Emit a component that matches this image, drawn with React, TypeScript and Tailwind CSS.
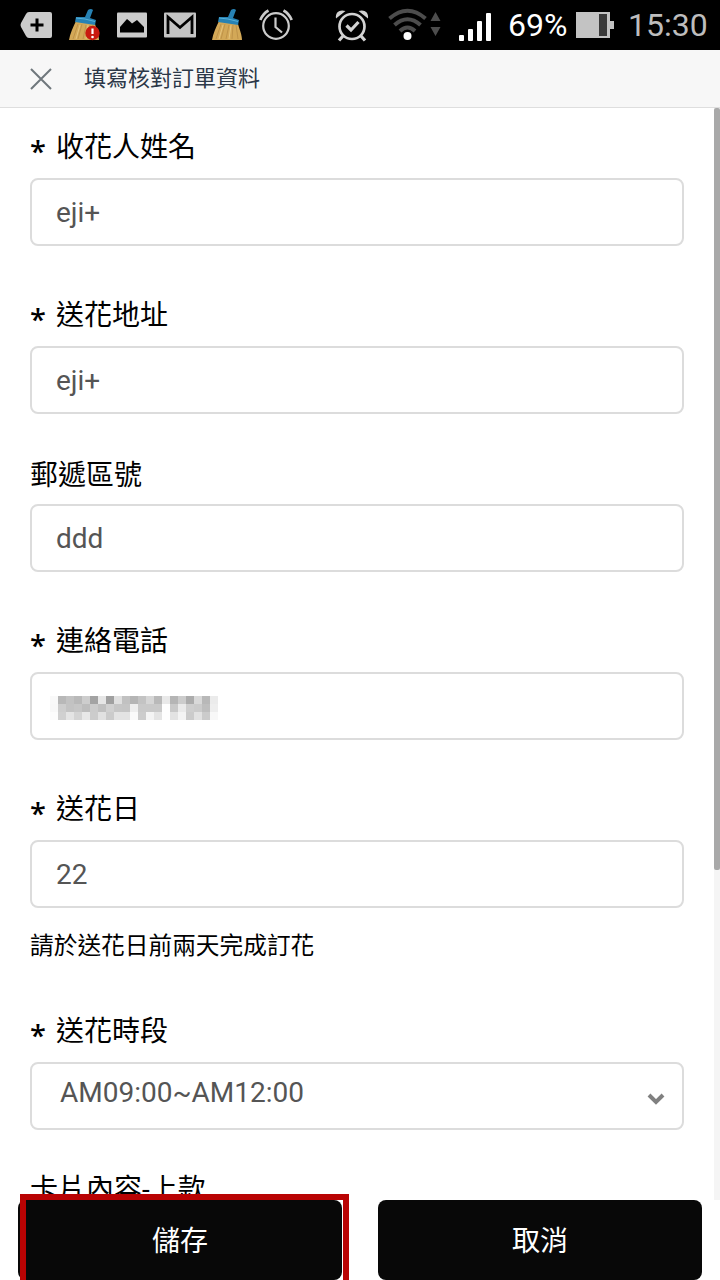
import React from "react";

interface FieldData {
  label: string;
  value?: string;
  required?: boolean;
  hint?: string;
  masked?: boolean;
  select?: boolean;
  className: string;
  labelClass: string;
}

const FIELDS: FieldData[] = [
  { label: "收花人姓名", value: "eji+", required: true, className: "pt-5", labelClass: "mb-[10px]" },
  { label: "送花地址", value: "eji+", required: true, className: "pt-[50px]", labelClass: "mb-[10px]" },
  { label: "郵遞區號", value: "ddd", className: "pt-[42px]", labelClass: "mb-2" },
  { label: "連絡電話", masked: true, required: true, className: "pt-[50px]", labelClass: "mb-[10px]" },
  { label: "送花日", value: "22", required: true, hint: "請於送花日前兩天完成訂花", className: "pt-[50px]", labelClass: "mb-[10px]" },
  { label: "送花時段", value: "AM09:00~AM12:00", required: true, select: true, className: "pt-12", labelClass: "mb-[10px]" },
];

// grey levels of the pixelated phone number, row by row
const MOSAIC = [
  "f9 b8 c2 b9 cd a3 e6 a0 e0 c1 b5 c3 d6 b9 e9 b5 cc ac d9 b8 eb",
  "f8 cd c3 c6 bd cb c0 d0 c6 c5 ee c9 c9 c9 fe c9 ea ce cb be ee",
  "fc d0 e4 d4 e8 cc e1 cb e3 e3 fa cc f4 e4 fe e3 f4 cb e2 cb f8",
];

function Mosaic() {
  return (
    <div className="-ml-[6px] mt-[3px] grid w-[168px] grid-cols-[repeat(21,8px)] grid-rows-[repeat(3,8px)]">
      {MOSAIC.join(" ").split(" ").map((c, i) => (
        <span key={i} style={{ backgroundColor: `#${c}${c}${c}` }} />
      ))}
    </div>
  );
}

function Broom({ alert }: { alert?: boolean }) {
  return (
    <svg width="34" height="34" viewBox="0 0 34 34" className="shrink-0">
      <path d="M8 13 L27 16 C29 23 31 27 31 32 L1 32 C2 26 5 19 8 13Z" fill="#d3a857" />
      <path d="M10 16 L5 31 M14 16 L10 31 M18 17 L15 31 M22 17 L21 31 M25 17 L27 31" stroke="#b98d45" strokeWidth="0.8" fill="none" />
      <path d="M12 17 L8 31 M20 17 L18 31" stroke="#e6c47e" strokeWidth="1" fill="none" />
      <path d="M8 9 L17 9 L20 2 Q23 0 25 2 L22 10 L28 12 L27 17 L7 14Z" fill="#2782b4" />
      <path d="M8 10 L17 11 L27 13.500" stroke="#56b0d8" strokeWidth="1" fill="none" />
      {alert && (
        <>
          <circle cx="24.500" cy="25" r="7.200" fill="#c9190f" />
          <path d="M24.500 20.500V26" stroke="#fff" strokeWidth="2.200" />
          <circle cx="24.500" cy="29" r="1.300" fill="#fff" />
        </>
      )}
    </svg>
  );
}

function StatusBar() {
  return (
    <div className="flex h-[50px] shrink-0 items-center bg-black pl-5 font-['Roboto',sans-serif]">
      <svg width="32" height="28" viewBox="0 0 32 28" className="mr-[16px] shrink-0">
        <path d="M9 1H30Q32 1 32 3V25Q32 27 30 27H9Q7 27 6 25L1 16Q0 14 1 12L6 3Q7 1 9 1Z" fill="#cbcbcb" />
        <path d="M17 7.500V20.500M10.500 14H23.500" stroke="#000" strokeWidth="3" />
      </svg>
      <Broom alert />
      <svg width="30" height="26" viewBox="0 0 30 26" className="ml-[15px] mr-[17px] shrink-0">
        <rect y="0.500" width="30" height="25" rx="1" fill="#cbcbcb" />
        <path d="M3 20.500V15L10 7L13 9.500L15 11.500L20 8L27 15V20.500Z" fill="#000" />
      </svg>
      <svg width="32" height="26" viewBox="0 0 32 26" className="mr-[15px] shrink-0">
        <rect y="0.500" width="32" height="25" rx="1" fill="#c4c4c4" />
        <path d="M4 22V5L16 15.500L28 5V22" stroke="#000" strokeWidth="2.800" fill="none" />
      </svg>
      <Broom />
      <svg width="34" height="34" viewBox="0 0 34 34" className="ml-[14px] mr-[42px] shrink-0" fill="none" stroke="#cbcbcb" strokeWidth="2.200">
        <circle cx="17" cy="18" r="12.800" />
        <path d="M16.500 9.500V19L23 24.500" />
        <path d="M1.300 12Q4 5.500 9.500 2.500M32.700 12Q30 5.500 24.500 2.500" strokeWidth="2.700" />
      </svg>
      <svg width="34" height="34" viewBox="0 0 34 34" className="mr-[18px] shrink-0" fill="none" stroke="#d2d2d2">
        <circle cx="17" cy="18.500" r="12.500" strokeWidth="2.700" />
        <path d="M11.500 17.500L16 22L23.500 14" strokeWidth="3.200" />
        <path d="M8 28L4 32.500M26 28L30 32.500" strokeWidth="3.200" />
        <path d="M1 10.500C0 4 5 1 10.500 3Z M33 10.500C34 4 29 1 23.500 3Z" fill="#d2d2d2" stroke="none" />
      </svg>
      <svg width="54" height="34" viewBox="0 0 54 34" className="ml-px mr-[17px] shrink-0" fill="none">
        <g stroke="#4d4d4d" strokeWidth="4">
          <path d="M1.500 10.500Q19.500 -5 37.500 10.500" />
          <path d="M6.500 17Q19.500 5.500 32.500 17" />
          <path d="M12 23Q19.500 16 27 23" />
        </g>
        <circle cx="19.500" cy="28" r="4" fill="#fff" />
        <path d="M42.500 13L47.500 4L52.500 13ZM42.500 19H52.500L47.500 28Z" fill="#4d4d4d" />
      </svg>
      <svg width="32" height="30" viewBox="0 0 32 30" className="mr-[17px] mt-[2px] shrink-0" fill="#fff">
        <rect x="0" y="24" width="5" height="6" rx="1" />
        <rect x="9" y="18" width="5" height="12" rx="1" />
        <rect x="18" y="10" width="5" height="20" rx="1" />
        <rect x="27" y="2" width="5" height="28" rx="1" />
      </svg>
      <span className="w-[67px] shrink-0 text-[32px] leading-[50px] text-white">69%</span>
      <svg width="38" height="26" viewBox="0 0 38 26" className="ml-px mr-[14px] shrink-0">
        <path d="M0 0H34V9H38V17H34V26H0Z" fill="#c3c3c3" />
        <rect x="23" y="2" width="8" height="22" fill="#3a3a3a" />
      </svg>
      <span className="shrink-0 text-[32px] leading-[50px] text-[#bdbdbd]">15:30</span>
    </div>
  );
}

function Field({ label, value, required, hint, masked, select, className, labelClass }: FieldData) {
  return (
    <div className={className}>
      <div className={`flex h-10 items-center text-[28px] leading-10 text-black ${labelClass}`}>
        {required && (
          <span className="w-[26px] pt-[5px] font-['Noto_Sans',sans-serif] text-[29px] font-medium leading-10">*</span>
        )}
        <span>{label}</span>
      </div>
      <div className="flex h-[68px] items-center justify-between rounded-lg border-2 border-[#dcdcdc] bg-white pl-6 pr-[17px] text-[28px] text-[#555]">
        {masked ? <Mosaic /> : <span className={select ? "-mt-[6px] ml-1" : "pt-0.5"}>{value}</span>}
        {select && (
          <svg width="18" height="14" viewBox="0 0 18 14" className="mt-[6px]" fill="none">
            <path d="M2 3L9 10L16 3" stroke="#808080" strokeWidth="4" />
          </svg>
        )}
      </div>
      {hint && <p className="mt-5 h-9 text-[23.700px] leading-9 text-black">{hint}</p>}
    </div>
  );
}

export default function App() {
  return (
    <div className="relative flex h-[1280px] w-[720px] flex-col overflow-hidden bg-white font-['Roboto','Noto_Sans_CJK_TC',sans-serif]">
      <StatusBar />
      {/* Title bar */}
      <header className="flex h-[58px] shrink-0 items-center border-b border-[#dedede] bg-[#f7f7f7] pl-[30px]">
        <svg width="22" height="22" viewBox="0 0 22 22" className="mr-8" fill="none">
          <path d="M1 1L21 21M21 1L1 21" stroke="#6f777c" strokeWidth="2" />
        </svg>
        <h1 className="text-[22px] leading-8 text-[#2c3848]">填寫核對訂單資料</h1>
      </header>
      {/* Form and scrollbar */}
      <main className="flex h-[1092px] shrink-0 overflow-hidden">
        <div className="w-[714px] px-[30px]">
          {FIELDS.map((field) => (
            <Field key={field.label} {...field} />
          ))}
          <div className="mt-10 h-10 text-[28px] leading-10 text-black">卡片內容-上款</div>
        </div>
        <div className="w-[6px] bg-[#f5f5f5]">
          <div className="h-[762px] rounded-[2px] bg-[#a9a9a9]" />
        </div>
      </main>
      {/* Actions */}
      <footer className="flex h-20 shrink-0 gap-9 px-[18px] text-[28px] text-white">
        <button className="flex-1 rounded-lg bg-[#080808] pt-1">儲存</button>
        <button className="flex-1 rounded-lg bg-[#080808] pt-1">取消</button>
      </footer>
      <div className="absolute left-5 top-[1194px] h-[92px] w-[329px] border-[6px] border-[#b90303]" />
    </div>
  );
}
